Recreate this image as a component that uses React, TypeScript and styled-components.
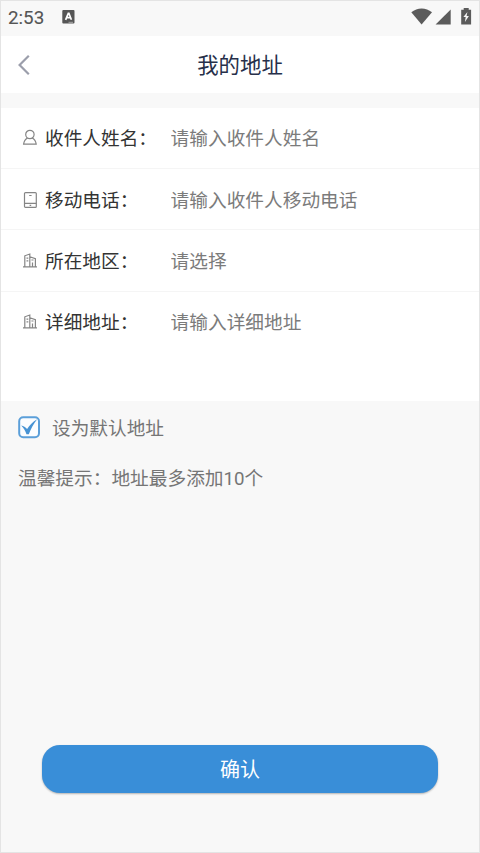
import React from "react";
import styled, { createGlobalStyle } from "styled-components";

const GlobalStyle = createGlobalStyle`
  * { box-sizing: border-box; }
  body { margin: 0; background: #f8f8f8; }
  body, button, input, textarea {
    font-family: Roboto, "Noto Sans CJK SC", sans-serif;
  }
`;

const Screen = styled.main`
  display: flex;
  flex-direction: column;
  height: 853px;
  width: 480px;
  border: 1px solid #e4e4e4;
  background: #f8f8f8;
  overflow: hidden;
`;

const StatusBar = styled.div`
  display: flex;
  align-items: center;
  height: 35px;
  padding: 0 4px 4px 7px;
  color: #555;
`;

const Clock = styled.span`
  width: 54px;
  font-size: 18.8px;
  line-height: 30px;
  padding-top: 2px;
  -webkit-text-stroke: 0.1px #555;
`;

const StatusIcons = styled.div`
  display: flex;
  margin-left: auto;
`;

const Header = styled.header`
  display: grid;
  grid-template-columns: 60px 1fr 60px;
  align-items: center;
  height: 57px;
  background: #fff;
`;

const BackButton = styled.button`
  display: flex;
  padding: 0 0 0 16px;
  border: 0;
  background: none;
`;

const Title = styled.h1`
  margin: 0;
  padding-top: 2px;
  text-align: center;
  font-size: 21.4px;
  font-weight: 400;
  line-height: 32px;
  color: #27304a;
`;

const Form = styled.section`
  margin-top: 15px;
  background: #fff;
`;

const Row = styled.label<{ $tall?: boolean }>`
  display: grid;
  grid-template-columns: 23px 125.6px 1fr;
  align-items: start;
  height: ${(p) => (p.$tall ? "109.6px" : "61.2px")};
  padding: 16.4px 0 0 21px;
  border-bottom: ${(p) => (p.$tall ? "0" : "1px solid #f5f5f5")};
`;

const RowIcon = styled.svg`
  width: 16px;
  height: 18px;
  margin-top: 5px;
  fill: none;
  stroke: #858585;
  stroke-width: 1.2;
`;

const LabelText = styled.span`
  font-size: 18.67px;
  line-height: 30px;
  color: #333;
  white-space: nowrap;
`;

const Field = styled.input`
  width: 100%;
  height: 30px;
  padding: 0;
  border: 0;
  outline: 0;
  background: none;
  font-size: 18.7px;
  line-height: 30px;
  &::placeholder { color: #7b7b7b; opacity: 1; }
`;

const DefaultOption = styled.div`
  display: flex;
  align-items: center;
  gap: 11px;
  height: 52px;
  padding-left: 17px;
  color: #757575;
`;

const OptionText = styled.span`
  padding-top: 3px;
  font-size: 18.67px;
  line-height: 30px;
`;

const Tip = styled.p`
  margin: 10.8px 0 0 17px;
  font-size: 18.7px;
  line-height: 30px;
  color: #757575;
`;

const Confirm = styled.button`
  height: 48px;
  margin: auto 41px 59px;
  padding: 2px 0 0;
  border: 0;
  border-radius: 18px;
  background: #398ed8;
  box-shadow: 0 1px 2px rgba(0, 0, 0, 0.28);
  color: #fff;
  font-size: 20px;
  line-height: 46px;
`;

const PersonIcon = () => (
  <RowIcon viewBox="0 0 16 18">
    <circle cx="7.9" cy="5.5" r="4.2" />
    <path d="M5.6 9C3.6 10 2 12.2 1.6 15.2h12.6c-.4-3-2-5.2-4-6.2" />
  </RowIcon>
);

const PhoneIcon = () => (
  <RowIcon viewBox="0 0 16 18">
    <rect x="2.5" y="1.6" width="11.8" height="14.8" rx="1" />
    <path d="M2.5 12.3h11.8M7.2 4.5h2.4M7.6 14.3h1.6" />
  </RowIcon>
);

const BuildingIcon = () => (
  <RowIcon viewBox="0 0 16 18">
    <path d="M1 14.9h14M2.8 14.9V3.8l5-1.8v12.9M7.8 4.7l5.6 2v8.2M4.5 6.2h1.8M4.5 8.8h1.8M9.4 8h2.1M10.5 14.9v-4.3" />
  </RowIcon>
);

const fields = [
  { label: "收件人姓名：", hint: "请输入收件人姓名", Icon: PersonIcon },
  { label: "移动电话：", hint: "请输入收件人移动电话", Icon: PhoneIcon },
  { label: "所在地区：", hint: "请选择", Icon: BuildingIcon },
  { label: "详细地址：", hint: "请输入详细地址", Icon: BuildingIcon },
];

export default function App() {
  return (
    <>
      <GlobalStyle />
      <Screen lang="zh-CN">
        <StatusBar>
          <Clock>2:53</Clock>
          <svg width="13" height="14" viewBox="0 0 13 14">
            <rect x="0.3" width="12.2" height="13.6" rx="1" fill="#565656" />
            <path d="M3.6 9.8 6.3 3.3h.6L9.4 9.8M4.8 7.7h3.6" fill="none" stroke="#fff" strokeWidth="1.7" />
            <path d="M6.5 12.3h4.5" stroke="#bbb" strokeWidth="0.8" />
          </svg>
          <StatusIcons>
            <svg width="64" height="18" viewBox="0 0 64 18" fill="#5b5b5b">
              <path d="M.3 4.3C6.2-.9 15-.9 21 4.3L10.6 16.6Z" />
              <path d="M24.6 16.6 39.7 1.6v15Z" />
              <path d="M50.2 1.7h2.5V-.4h5v2.1h2.4v14.9h-9.9Z" />
              <path d="m56.4 4-4 5h2.3l-.8 5 4-6h-2.3Z" fill="#f8f8f8" />
            </svg>
          </StatusIcons>
        </StatusBar>
        <Header>
          <BackButton aria-label="返回">
            <svg width="14" height="22" viewBox="0 0 14 22" fill="none" stroke="#9b9eab" strokeWidth="2.2">
              <path d="M11.8 1.8 2.6 11l9.2 9.2" />
            </svg>
          </BackButton>
          <Title>我的地址</Title>
        </Header>
        <Form>
          {fields.map(({ label, hint, Icon }, i) => (
            <Row key={label} $tall={i === fields.length - 1}>
              <Icon />
              <LabelText>{label}</LabelText>
              <Field placeholder={hint} />
            </Row>
          ))}
        </Form>
        <DefaultOption role="checkbox" aria-checked="true">
          <svg width="23" height="23" viewBox="0 0 23 23" fill="none">
            <rect x="1.2" y="1.2" width="19.8" height="20" rx="4" fill="#fbfdff" stroke="#5b9fd9" strokeWidth="2" />
            <path d="M3.2 9.4c2.5.4 4.2 1.5 5.9 3.7C11.6 9 14.6 6 19.2 3.3 15.6 8 12.7 13.2 10.8 18.2H8.5C7.3 14.8 5.7 12 3.2 9.4Z" fill="#4793d4" />
          </svg>
          <OptionText>设为默认地址</OptionText>
        </DefaultOption>
        <Tip>温馨提示：地址最多添加10个</Tip>
        <Confirm>确认</Confirm>
      </Screen>
    </>
  );
}
